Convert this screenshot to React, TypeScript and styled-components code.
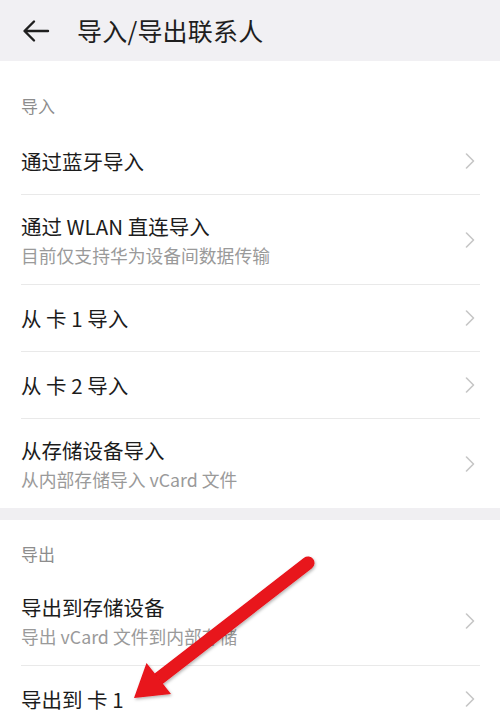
import React from "react";
import styled, { createGlobalStyle } from "styled-components";

const Global = createGlobalStyle`
  html, body { margin: 0; padding: 0; background: #ffffff; }
  body { font-family: "Noto Sans CJK SC", "Noto Sans", sans-serif; }
  * { box-sizing: border-box; }
`;

const Page = styled.div`
  position: relative;
  width: 500px;
  height: 713px;
  overflow: hidden;
  background: #ffffff;
  display: flex;
  flex-direction: column;
`;

const Header = styled.header`
  height: 61px;
  flex: none;
  background: #f1f0f3;
  display: flex;
  align-items: center;
  padding-left: 22px;
  gap: 27px;
`;

const BackButton = styled.button`
  border: none;
  background: none;
  padding: 0;
  width: 28px;
  height: 24px;
  display: flex;
  align-items: center;
  justify-content: center;
  color: #1f1f1f;
`;

const Title = styled.h1`
  margin: 0;
  font-size: 25px;
  font-weight: 400;
  color: #1e1e1e;
  line-height: 1;
  letter-spacing: 0.2px;
`;

const Section = styled.section`
  background: #ffffff;
  display: flex;
  flex-direction: column;
`;

const SectionLabel = styled.div<{ $top: number; $height: number }>`
  height: ${(p) => p.$height}px;
  padding: ${(p) => p.$top}px 21px 0;
  font-size: 17px;
  line-height: 22px;
  color: #8d8d8d;
`;

const Band = styled.div`
  height: 12px;
  flex: none;
  background: #f0eff2;
`;

const Row = styled.div<{ $height: number; $divider: boolean }>`
  position: relative;
  height: ${(p) => p.$height}px;
  margin: 0 20px 0 21px;
  display: flex;
  align-items: center;
  justify-content: space-between;
  border-bottom: ${(p) => (p.$divider ? "1px solid #e9e9e9" : "none")};
  flex: none;
`;

const RowText = styled.div`
  display: flex;
  flex-direction: column;
  gap: 2px;
`;

const RowTitle = styled.div`
  font-size: 20.5px;
  line-height: 28px;
  color: #1c1c1c;
  white-space: pre;
`;

const RowSub = styled.div`
  font-size: 17.8px;
  line-height: 26px;
  color: #9a9a9a;
  white-space: pre;
`;

const ChevronWrap = styled.div`
  width: 10px;
  height: 16px;
  margin-right: 5px;
  display: flex;
`;

const ArrowOverlay = styled.svg`
  position: absolute;
  left: 0;
  top: 0;
  pointer-events: none;
`;

const Chevron = () => (
  <ChevronWrap>
    <svg width="10" height="16" viewBox="0 0 10 16">
      <polyline
        points="1.5,1 8.5,8 1.5,15"
        fill="none"
        stroke="#c6c6c6"
        strokeWidth="1.6"
        strokeLinecap="round"
        strokeLinejoin="round"
      />
    </svg>
  </ChevronWrap>
);

type Item = { title: string; sub?: string; height: number; divider: boolean };

const importItems: Item[] = [
  { title: "通过蓝牙导入", height: 67, divider: true },
  { title: "通过 WLAN 直连导入", sub: "目前仅支持华为设备间数据传输", height: 90, divider: true },
  { title: "从 卡 1 导入", height: 67, divider: true },
  { title: "从 卡 2 导入", height: 67, divider: true },
  { title: "从存储设备导入", sub: "从内部存储导入 vCard 文件", height: 89, divider: false },
];

const exportItems: Item[] = [
  { title: "导出到存储设备", sub: "导出 vCard 文件到内部存储", height: 90, divider: true },
  { title: "导出到 卡 1", height: 67, divider: true },
];

const ListRow = ({ item }: { item: Item }) => (
  <Row $height={item.height} $divider={item.divider}>
    <RowText>
      <RowTitle>{item.title}</RowTitle>
      {item.sub && <RowSub>{item.sub}</RowSub>}
    </RowText>
    <Chevron />
  </Row>
);

export default function App() {
  return (
    <>
      <Global />
      <Page>
        <Header>
          <BackButton aria-label="back">
            <svg width="28" height="24" viewBox="0 0 28 24">
              <path
                d="M26 12 H3 M12 2.5 L2.5 12 L12 21.5"
                fill="none"
                stroke="#1f1f1f"
                strokeWidth="2.4"
                strokeLinecap="round"
                strokeLinejoin="round"
              />
            </svg>
          </BackButton>
          <Title>导入/导出联系人</Title>
        </Header>
        <Section>
          <SectionLabel $top={34} $height={67}>导入</SectionLabel>
          {importItems.map((it) => (
            <ListRow key={it.title} item={it} />
          ))}
        </Section>
        <Band />
        <Section>
          <SectionLabel $top={23} $height={56}>导出</SectionLabel>
          {exportItems.map((it) => (
            <ListRow key={it.title} item={it} />
          ))}
        </Section>
        <ArrowOverlay width="500" height="713" viewBox="0 0 500 713">
          <defs>
            <filter id="shadow" x="-20%" y="-20%" width="140%" height="140%">
              <feDropShadow dx="1" dy="1.5" stdDeviation="1.5" floodColor="#000" floodOpacity="0.3" />
            </filter>
          </defs>
          <g filter="url(#shadow)">
            <line x1="308" y1="563" x2="157" y2="680" stroke="#e8121a" strokeWidth="13" strokeLinecap="round" />
            <polygon points="134,698 146.5,663 171,694" fill="#e8121a" />
          </g>
        </ArrowOverlay>
      </Page>
    </>
  );
}
